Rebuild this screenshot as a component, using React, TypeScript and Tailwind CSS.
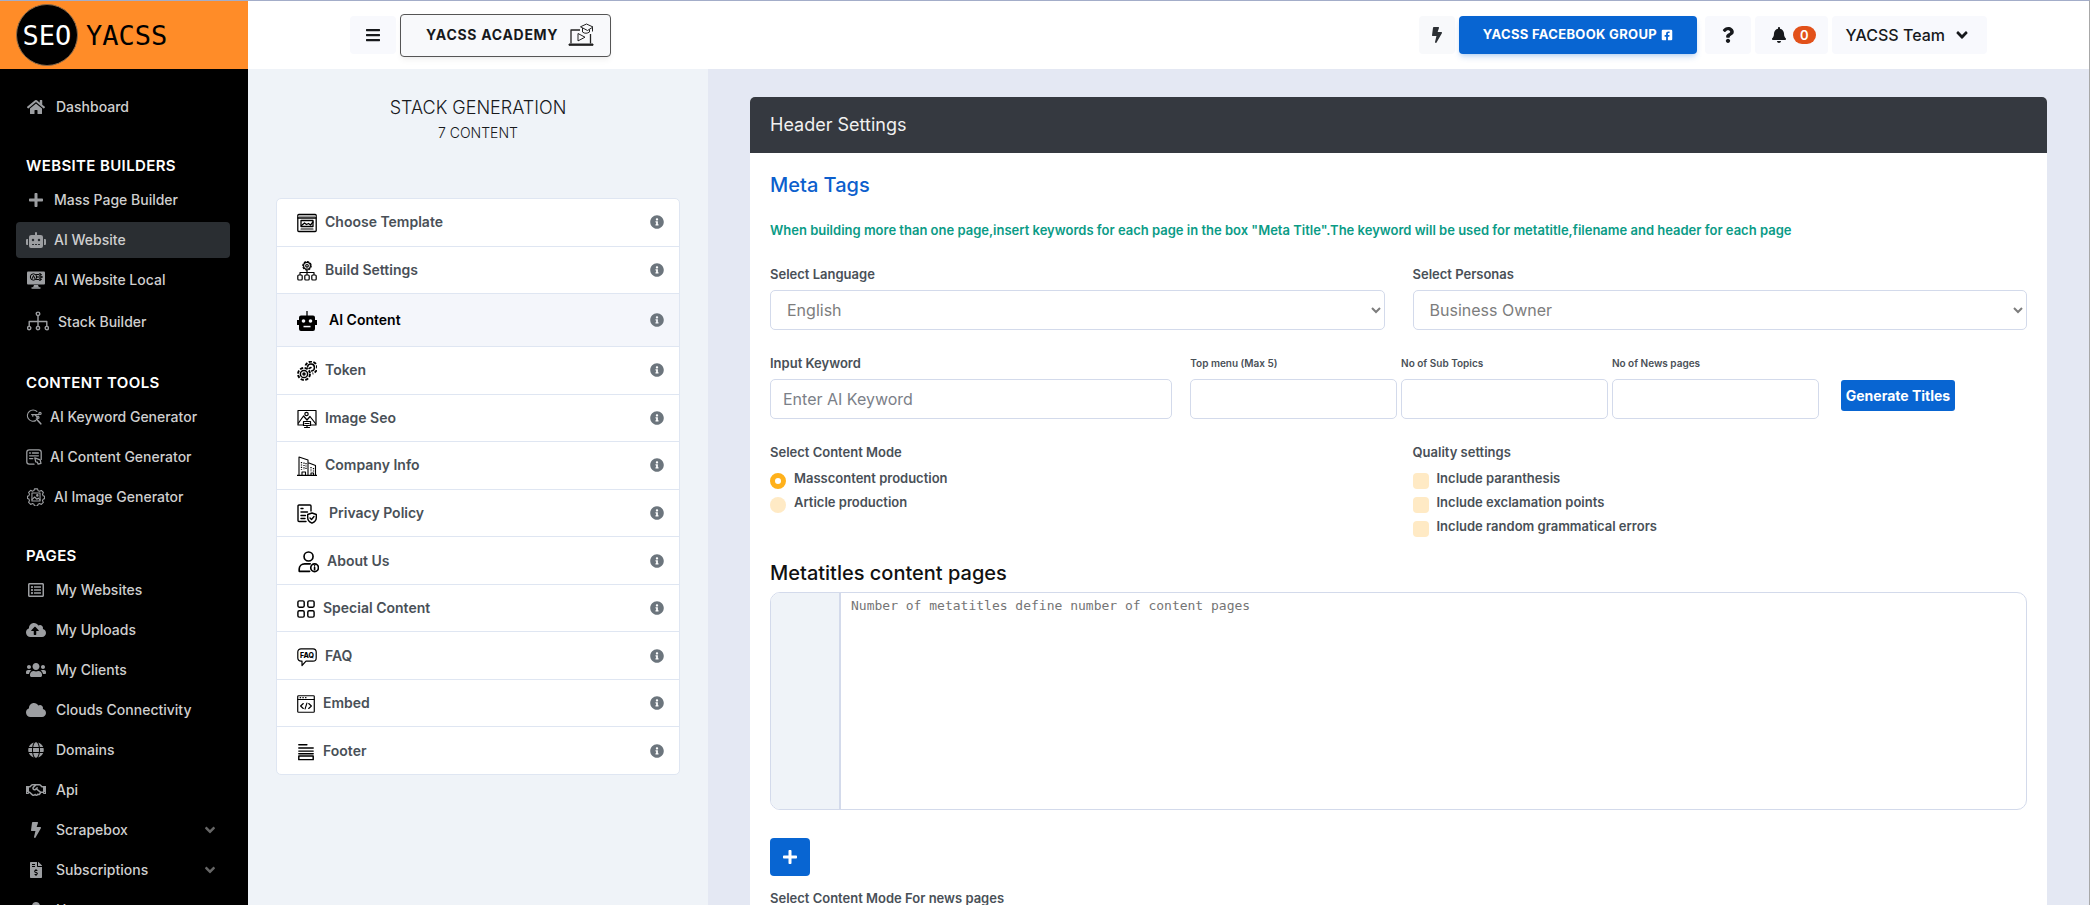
import { useState, type ReactNode } from 'react';
import {
    FaAngleDown, FaBars, FaBell, FaBolt, FaCloud, FaCloudUploadAlt, FaFacebookSquare, FaFileInvoiceDollar,
    FaGlobe, FaHome, FaInfoCircle, FaPlus, FaQuestion, FaRegHandshake, FaRegListAlt, FaRobot, FaUser, FaUsers,
} from 'react-icons/fa';

type SvgProps = { size?: number; children: ReactNode; sw?: number };

const Svg = ({ size = 20, sw = 1.3, children }: SvgProps) => (
    <svg width={size} height={size} viewBox="0 0 20 20" fill="none" stroke="currentColor" strokeWidth={sw} strokeLinecap="round" strokeLinejoin="round" aria-hidden="true">
        {children}
    </svg>
);

const MonitorAiIcon = () => (
    <Svg size={20}>
        <rect x="1" y="1.5" width="18" height="13" rx="1" fill="currentColor" stroke="none" />
        <path d="M8 15h4l1 2.500H7z" fill="currentColor" stroke="none" />
        <path d="M6 18h8" />
        <g stroke="#000" strokeWidth="1">
            <circle cx="7.500" cy="7" r="3.200" />
            <path d="M6.200 8.500l1.300-3 1.300 3M10.500 4.500h2M10.500 7h3M10.500 9.500h2" />
            <circle cx="14" cy="4.500" r="1" />
            <circle cx="15" cy="7" r="1" />
            <circle cx="14" cy="9.500" r="1" />
        </g>
    </Svg>
);

const StackIcon = () => (
    <Svg size={22} sw={1.3}>
        <circle cx="10" cy="2.600" r="1.600" />
        <path d="M10 4.200v9.300M2 13.500V9.500h16v4" />
        <circle cx="2" cy="15.500" r="1.500" />
        <circle cx="10" cy="15.500" r="1.500" />
        <circle cx="18" cy="15.500" r="1.500" />
    </Svg>
);

const KeywordIcon = () => (
    <Svg size={16} sw={1.5}>
        <path d="M13.500 3A7 7 0 1 0 12 14.500" />
        <path d="M13 12.500l5.500 6" strokeWidth="2" />
        <path d="M7 7h9M8.500 7v2M11 7l3 3" />
        <circle cx="17.500" cy="5.500" r="1.400" />
        <circle cx="15" cy="10.500" r="1.300" />
    </Svg>
);

const ContentIcon = () => (
    <Svg size={16} sw={1.6}>
        <path d="M10 19H4a3 3 0 0 1-3-3V4a3 3 0 0 1 3-3h12a3 3 0 0 1 3 3v9" />
        <path d="M4.500 5h1M8 5h7.500M4.500 8.500h11M4.500 12h4" />
        <path d="M11 11l1.200 5 2 .500 1 2.500 3.500-1-1-4.500z" />
    </Svg>
);

const GearImageIcon = () => (
    <Svg size={18} sw={1.2}>
        <path d="M8.300 1h3.400l.600 2 1.700.700 1.900-1 2.300 2.300-1 1.900.700 1.700 1.600.600v2.600l-1.600.600-.700 1.700 1 1.900-2.300 2.300-1.900-1-1.700.700-.600 2H8.300l-.600-2-1.700-.700-1.900 1L1.800 15.900l1-1.900-.700-1.700-1.600-.600V9.100l1.600-.600.700-1.700-1-1.900 2.300-2.300 1.900 1 1.700-.700z" />
        <rect x="5.500" y="5.500" width="9" height="9" />
        <path d="M5.500 13l3-3 2.500 2.500 1.500-1.300 2 2" />
        <circle cx="11.500" cy="8.200" r=".8" />
    </Svg>
);

const AcademyIcon = () => (
    <svg width="26" height="24" viewBox="0 0 26 24" fill="none" stroke="#222" strokeWidth="1" strokeLinejoin="round" aria-hidden="true">
        <path d="M12 7H3v13.500M22.500 11v9.500" strokeWidth="1.300" />
        <path d="M1 21h24v1.300H1z" fill="#222" />
        <path d="M10 10.500l7 3.700-7 3.700z" />
        <path d="M12.500 3.800L18.500 1l6.500 3-5.500 3.500zM14.500 5v4c2 1.800 5 1.500 7 0V6.500M24.500 4.500v4" />
    </svg>
);

const TemplateIcon = () => (
    <Svg>
        <rect x=".8" y="1.500" width="18.400" height="17" rx="1" />
        <path d="M1 5h18" />
        <path d="M1.500 3.300h17" stroke="#999" />
        <rect x="4" y="7.500" width="12" height="6" />
        <path d="M4.500 12.500l3-2.500 2 1.500 2-1 2 1.500 2.500-3" />
        <path d="M4 16h12" strokeWidth="1.100" />
    </Svg>
);

const BuildIcon = () => (
    <Svg sw={1.2}>
        <circle cx="10" cy="4.800" r="3.400" />
        <circle cx="10" cy="4.800" r="1.300" />
        <circle cx="10" cy="4.800" r="4.200" strokeDasharray="1.300 2" />
        <path d="M10 9v4.500M3 13.500v-2h14v2" />
        <rect x=".8" y="14" width="4.400" height="5" rx="1" />
        <rect x="7.800" y="14" width="4.400" height="5" rx="1" />
        <rect x="14.800" y="14" width="4.400" height="5" rx="1" />
    </Svg>
);

const BotIcon = () => (
    <Svg>
        <path d="M10 .500V5" />
        <path d="M4 4.500h12a2 2 0 0 1 2 2V9h2v5h-2v4a2 2 0 0 1-2 2H4a2 2 0 0 1-2-2v-4H0V9h2V6.500a2 2 0 0 1 2-2z" fill="currentColor" stroke="none" />
        <g fill="#f4f6fb" stroke="none">
            <circle cx="6.500" cy="10" r="1.800" />
            <circle cx="13.500" cy="10" r="1.800" />
            <rect x="6.500" y="14.800" width="7" height="1.500" />
        </g>
    </Svg>
);

const TokenIcon = () => (
    <Svg sw={1.5}>
        <circle cx="7" cy="13" r="6" strokeDasharray="3.200 1.500" strokeWidth="1.900" strokeLinecap="butt" />
        <circle cx="7" cy="13" r="3.600" />
        <circle cx="7" cy="13" r="1" />
        <path d="M8.500 4.500A6 6 0 1 1 15.500 12.500" strokeDasharray="3.200 1.500" strokeWidth="1.900" strokeLinecap="butt" />
        <path d="M10.500 6A3.500 3.500 0 1 1 14.500 10M12 7.500l2-1" />
    </Svg>
);

const ImageSeoIcon = () => (
    <Svg sw={1.2}>
        <path d="M6 16H1V1.500h18V16h-5" />
        <circle cx="9.500" cy="5" r="1.700" />
        <path d="M1.500 14l5-7 3.500 4 3-3.500 5.500 7" />
        <rect x="6.500" y="12.500" width="7" height="4" fill="#fff" />
        <path d="M8 14.500h4M10 16.500v1.500M7.500 18.500h5" />
    </Svg>
);

const CompanyIcon = () => (
    <Svg sw={1.1}>
        <path d="M0 19.400h20" strokeWidth="1.500" />
        <path d="M2 19V1l9 3v15M12 7l6.500 2.500V19" />
        <path d="M4.500 6v8M7 6.500V14M9 7v7M14 11v5M16.500 12v4" strokeDasharray="1.200 1.200" strokeWidth="1.300" strokeLinecap="butt" />
        <path d="M5 19v-3h3.500v3M14 19v-2h2.500v2" />
    </Svg>
);

const PrivacyIcon = () => (
    <Svg sw={1.4}>
        <path d="M9 17.500H2a1 1 0 0 1-1-1V2a1 1 0 0 1 1-1h11a1 1 0 0 1 1 1v5" />
        <path d="M4 4.500h2M4 8h6.500M4 11.500h4.500M4 14.500h4" />
        <path d="M15 9l4.300 1.500v3.300c0 2.600-1.800 4.400-4.300 5.400-2.500-1-4.300-2.800-4.300-5.400v-3.300z" />
        <path d="M13 14l1.500 1.500 2.500-3" />
    </Svg>
);

const AboutIcon = () => (
    <Svg size={22} sw={1.5}>
        <circle cx="10.500" cy="5" r="4.100" />
        <path d="M11.500 18.500H2v-2.200c0-2.800 2.200-4.600 5-4.600h5" />
        <circle cx="16" cy="15.200" r="3.500" />
        <path d="M16 15v2M16 13.400v.100" />
    </Svg>
);

const GridIcon = () => (
    <Svg size={18} sw={1.6}>
        <rect x="1" y="1" width="7" height="7" rx="1.500" />
        <rect x="12" y="1" width="7" height="7" rx="1.500" />
        <rect x="1" y="12" width="7" height="7" rx="1.500" />
        <rect x="12" y="12" width="7" height="7" rx="1.500" />
    </Svg>
);

const FaqIcon = () => (
    <Svg sw={1.2}>
        <path d="M4 1.800h12a3.200 3.200 0 0 1 3.200 3.200v6A3.200 3.200 0 0 1 16 14.200H9L5 18.500v-4.300H4A3.200 3.200 0 0 1 .800 11V5A3.200 3.200 0 0 1 4 1.800z" />
        <text x="10" y="10.800" textAnchor="middle" fontSize="7" fontWeight="800" fill="currentColor" stroke="none" fontFamily="Inter, sans-serif">FAQ</text>
    </Svg>
);

const EmbedIcon = () => (
    <Svg size={18}>
        <rect x=".8" y=".8" width="18.400" height="18.400" rx="1" />
        <path d="M1 5h18M3.500 3h.500M6.500 3H7M9.500 3h.500" />
        <path d="M7 9.500L4 12.200 7 15M13 9.500l3 2.700L13 15M11 9l-2 6.500" />
    </Svg>
);

const FooterIcon = () => (
    <Svg size={18} sw={1.6}>
        <path d="M2 2h9M2 5.500h16M2 9h16M2 12h16" />
        <rect x="2" y="14.500" width="16" height="4" />
    </Svg>
);

type NavItem = { label: string; icon: ReactNode; box?: string; gap?: string; tall?: boolean; active?: boolean; more?: boolean };

const sections: { title?: string; items: NavItem[] }[] = [
    { items: [{ label: 'Dashboard', icon: <FaHome size={18} />, gap: 'gap-2.5' }] },
    {
        title: 'WEBSITE BUILDERS',
        items: [
            { label: 'Mass Page Builder', icon: <FaPlus size={16} /> },
            { label: 'AI Website', icon: <FaRobot size={20} />, active: true },
            { label: 'AI Website Local', icon: <MonitorAiIcon /> },
            { label: 'Stack Builder', icon: <StackIcon />, box: 'w-6', tall: true },
        ],
    },
    {
        title: 'CONTENT TOOLS',
        items: [
            { label: 'AI Keyword Generator', icon: <KeywordIcon />, box: 'w-4' },
            { label: 'AI Content Generator', icon: <ContentIcon />, box: 'w-4' },
            { label: 'AI Image Generator', icon: <GearImageIcon /> },
        ],
    },
    {
        title: 'PAGES',
        items: [
            { label: 'My Websites', icon: <FaRegListAlt size={16} />, gap: 'gap-2.5' },
            { label: 'My Uploads', icon: <FaCloudUploadAlt size={20} />, gap: 'gap-2.5' },
            { label: 'My Clients', icon: <FaUsers size={20} />, gap: 'gap-2.5' },
            { label: 'Clouds Connectivity', icon: <FaCloud size={20} />, gap: 'gap-2.5' },
            { label: 'Domains', icon: <FaGlobe size={16} />, gap: 'gap-2.5' },
            { label: 'Api', icon: <FaRegHandshake size={20} />, gap: 'gap-2.5' },
            { label: 'Scrapebox', icon: <FaBolt size={16} />, gap: 'gap-2.5', more: true },
            { label: 'Subscriptions', icon: <FaFileInvoiceDollar size={16} />, gap: 'gap-2.5', more: true },
            { label: 'Users', icon: <FaUser size={16} />, gap: 'gap-2.5' },
        ],
    },
];

const steps: { label: string; icon: ReactNode; gap?: string }[] = [
    { label: 'Choose Template', icon: <TemplateIcon /> },
    { label: 'Build Settings', icon: <BuildIcon /> },
    { label: 'AI Content', icon: <BotIcon />, gap: 'gap-3' },
    { label: 'Token', icon: <TokenIcon /> },
    { label: 'Image Seo', icon: <ImageSeoIcon /> },
    { label: 'Company Info', icon: <CompanyIcon /> },
    { label: 'Privacy Policy', icon: <PrivacyIcon />, gap: 'gap-3' },
    { label: 'About Us', icon: <AboutIcon /> },
    { label: 'Special Content', icon: <GridIcon /> },
    { label: 'FAQ', icon: <FaqIcon /> },
    { label: 'Embed', icon: <EmbedIcon /> },
    { label: 'Footer', icon: <FooterIcon /> },
];

const labelClass = 'block text-[13px] leading-5 font-semibold text-[#495057]';
const smallLabelClass = 'block text-[10px] leading-5 font-semibold text-[#495057]';
const fieldClass = 'block w-full h-10 rounded-[5px] border border-[#d3daeb] bg-white px-3 text-base placeholder:text-[#7b8088]';
const checkClass = 'appearance-none size-4 mt-1 shrink-0 bg-[#ffeac5]';
const optionClass = 'flex items-center gap-2 h-6 text-[13px] font-semibold text-[#495057]';

function Sidebar() {
    return (
        <aside className="w-[248px] shrink-0 bg-black overflow-hidden">
            <div className="h-[68px] bg-[#ff8c28] flex items-center pl-4 gap-2 font-['DejaVu_Sans_Mono',monospace] text-[27px] leading-none">
                <span className="size-[62px] rounded-full bg-black border border-[#8a6a4a] text-white flex items-center justify-center">SEO</span>
                <span className="text-black">YACSS</span>
            </div>
            <nav className="pt-5 px-4 mr-0.5">
                {sections.map((section, i) => (
                    <div key={i}>
                        {section.title && (
                            <h2 className="pt-[27px] pb-1.5 pl-2.5 text-[15px] leading-5 font-semibold tracking-wide text-white">{section.title}</h2>
                        )}
                        {section.items.map((item) => (
                            <a
                                key={item.label}
                                href="#"
                                className={`flex items-center mb-1 pl-2.5 pr-3 rounded text-sm font-medium text-[#cfcfcf] ${item.gap ?? 'gap-2'} ${item.tall ? 'h-10' : 'h-9'} ${item.active ? 'bg-[#2a2e32]' : ''}`}
                            >
                                <span className={`flex justify-center text-[#9c9ea1] ${item.box ?? 'w-5'}`}>{item.icon}</span>
                                {item.label}
                                {item.more && <FaAngleDown size={16} className="ml-auto text-[#666]" />}
                            </a>
                        ))}
                    </div>
                ))}
            </nav>
        </aside>
    );
}

function TopBar() {
    return (
        <header className="h-[68px] shrink-0 bg-white flex items-center justify-between pl-[102px] pr-[102px] text-[#17191c]">
            <div className="flex items-center gap-1">
                <button aria-label="Menu" className="w-[46px] h-[38px] rounded bg-[#f8f9fd] flex items-center justify-center">
                    <FaBars size={16} />
                </button>
                <button className="h-[43px] pl-[25px] pr-4 rounded border border-[#555] bg-[#f8f9fb] shadow-md shadow-black/5 flex items-center gap-2.5 text-sm font-bold tracking-wider">
                    YACSS ACADEMY
                    <AcademyIcon />
                </button>
            </div>
            <div className="flex items-center gap-1">
                <button aria-label="Quick actions" className="w-9 h-[38px] rounded bg-[#f8f9fb] flex items-center justify-center text-[#2c3034]">
                    <FaBolt size={16} />
                </button>
                <button className="h-[38px] px-6 mr-1 rounded bg-[#0865d2] shadow-md shadow-[#0865d2]/20 flex items-center gap-1 text-[13px] font-bold tracking-wide text-white">
                    YACSS FACEBOOK GROUP
                    <FaFacebookSquare size={12} />
                </button>
                <button aria-label="Help" className="w-[46px] h-[38px] rounded bg-[#f8f9fd] flex items-center justify-center">
                    <FaQuestion size={16} />
                </button>
                <button aria-label="Notifications" className="h-[38px] pl-4 pr-3 rounded bg-[#f8f9fd] flex items-center gap-1.5">
                    <FaBell size={16} />
                    <span className="h-[18px] px-[7px] rounded-full bg-[#e2511a] text-[13px] leading-[18px] font-semibold text-white">0</span>
                </button>
                <button className="h-[38px] pl-3.5 pr-4 rounded bg-[#f8f9fd] flex items-center gap-2 text-base font-medium">
                    YACSS Team
                    <FaAngleDown size={18} />
                </button>
            </div>
        </header>
    );
}

function StepList() {
    const [active, setActive] = useState('AI Content');

    return (
        <section className="w-[460px] shrink-0 bg-[#eff3f8] px-7 pt-[27px]">
            <div className="text-center text-[#17191c] pb-[52px]">
                <h1 className="text-lg leading-6 font-light">STACK GENERATION</h1>
                <p className="text-sm leading-[26px] font-light">7 CONTENT</p>
            </div>
            <ul className="flex flex-col h-[577px] rounded-[5px] border border-[#dfe6f2] bg-white overflow-hidden divide-y divide-[#dfe6f2]">
                {steps.map((step) => {
                    const on = step.label === active;
                    return (
                        <li key={step.label} className={on ? 'h-[53px]' : 'flex-1'}>
                            <button
                                onClick={() => setActive(step.label)}
                                className={`w-full h-full pl-5 pr-[15px] flex items-center text-sm font-semibold ${step.gap ?? 'gap-2'} ${on ? 'bg-[#f4f6fb] text-black' : 'text-[#495057]'}`}
                            >
                                <span className="text-black pt-0.5">{step.icon}</span>
                                {step.label}
                                <FaInfoCircle size={14} className="ml-auto text-[#6c757d]" />
                            </button>
                        </li>
                    );
                })}
            </ul>
        </section>
    );
}

function HeaderSettings() {
    const [mode, setMode] = useState('mass');

    return (
        <main className="flex-1 min-w-0 bg-[#e4e8f3] px-[42px] pt-7">
            <div className="rounded-t-[5px] overflow-hidden bg-white min-h-full">
                <h2 className="h-14 px-5 bg-[#353940] flex items-center text-lg text-[#f1f1f1]">Header Settings</h2>
                <form className="p-5" onSubmit={(e) => e.preventDefault()}>
                    <h3 className="text-xl leading-6 font-medium text-[#0c5fcd]">Meta Tags</h3>
                    <p className="mt-[23px] text-[13px] leading-5 font-semibold text-[#0a9b86]">
                        When building more than one page,insert keywords for each page in the box "Meta Title".The keyword will be used for metatitle,filename and header for each page
                    </p>

                    <div className="mt-6 grid grid-cols-2 gap-7">
                        <div>
                            <label htmlFor="language" className={`${labelClass} mb-1.5`}>Select Language</label>
                            <select id="language" className={`${fieldClass} text-[#7d7d7d]`}>
                                <option>English</option>
                            </select>
                        </div>
                        <div>
                            <label htmlFor="persona" className={`${labelClass} mb-1.5`}>Select Personas</label>
                            <select id="persona" className={`${fieldClass} text-[#7d7d7d]`}>
                                <option>Business Owner</option>
                            </select>
                        </div>
                    </div>

                    <div className="mt-[23px] flex items-end">
                        <div className="w-[32%] mr-[18px]">
                            <label htmlFor="keyword" className={`${labelClass} mb-1.5`}>Input Keyword</label>
                            <input id="keyword" type="text" placeholder="Enter AI Keyword" className={fieldClass} />
                        </div>
                        <div className="w-1/2 grid grid-cols-3 gap-1">
                            <div>
                                <label htmlFor="top-menu" className={`${smallLabelClass} mb-1.5`}>Top menu (Max 5)</label>
                                <input id="top-menu" type="text" className={fieldClass} />
                            </div>
                            <div>
                                <label htmlFor="sub-topics" className={`${smallLabelClass} mb-1.5`}>No of Sub Topics</label>
                                <input id="sub-topics" type="text" className={fieldClass} />
                            </div>
                            <div>
                                <label htmlFor="news-pages" className={`${smallLabelClass} mb-1.5`}>No of News pages</label>
                                <input id="news-pages" type="text" className={fieldClass} />
                            </div>
                        </div>
                        <button className="ml-[22px] mb-2 h-[31px] px-[5px] rounded-[3px] bg-[#0865d2] text-sm font-bold text-white whitespace-nowrap">Generate Titles</button>
                    </div>

                    <div className="mt-[23px] grid grid-cols-2 gap-7">
                        <fieldset>
                            <legend className={`${labelClass} mb-[5px]`}>Select Content Mode</legend>
                            {[['mass', 'Masscontent production'], ['article', 'Article production']].map(([value, text]) => (
                                <label key={value} className={optionClass}>
                                    <input
                                        type="radio"
                                        name="mode"
                                        checked={mode === value}
                                        onChange={() => setMode(value)}
                                        className={`${checkClass} rounded-full checked:bg-white checked:border-5 checked:border-[#ffb11b]`}
                                    />
                                    {text}
                                </label>
                            ))}
                        </fieldset>
                        <fieldset>
                            <legend className={`${labelClass} mb-[5px]`}>Quality settings</legend>
                            {['Include paranthesis', 'Include exclamation points', 'Include random grammatical errors'].map((text) => (
                                <label key={text} className={optionClass}>
                                    <input type="checkbox" className={`${checkClass} rounded checked:bg-[#ffb11b]`} />
                                    {text}
                                </label>
                            ))}
                        </fieldset>
                    </div>

                    <label htmlFor="metatitles" className="block mt-[22px] mb-[7px] text-xl leading-6 font-medium text-[#111]">Metatitles content pages</label>
                    <div className="flex h-[218px] rounded-[10px] border border-[#d3daeb] overflow-hidden">
                        <div className="w-[70px] shrink-0 bg-[#eff3f8] border-r-2 border-[#d3daeb]" />
                        <textarea
                            id="metatitles"
                            placeholder="Number of metatitles define number of content pages"
                            className="flex-1 resize-none pt-1 pl-2.5 font-['DejaVu_Sans_Mono',monospace] text-[13px] leading-[18px] placeholder:text-[#757575]"
                        />
                    </div>

                    <button aria-label="Add" className="mt-7 w-10 h-[38px] rounded bg-[#0865d2] text-white flex items-center justify-center">
                        <FaPlus size={16} />
                    </button>
                    <p className={`${labelClass} mt-3`}>Select Content Mode For news pages</p>
                </form>
            </div>
        </main>
    );
}

export default function App() {
    return (
        <div className="h-screen flex overflow-hidden border-t border-t-[#a3adc9] border-r border-r-[#a8a8a8] font-['Inter',sans-serif]">
            <Sidebar />
            <div className="flex-1 min-w-0 flex flex-col">
                <TopBar />
                <div className="flex-1 min-h-0 flex">
                    <StepList />
                    <HeaderSettings />
                </div>
            </div>
        </div>
    );
}
